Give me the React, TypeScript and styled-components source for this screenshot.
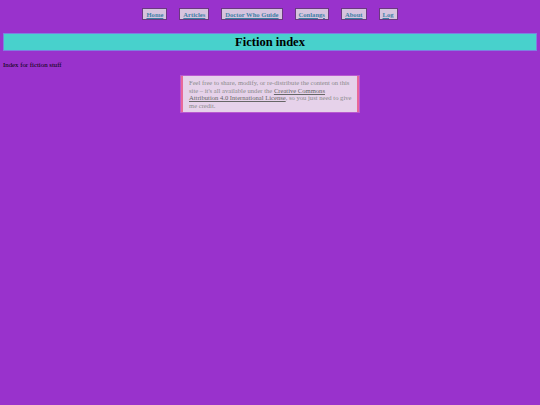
import styled, { createGlobalStyle } from "styled-components"

const Global = createGlobalStyle`
    html, body {
        margin: 0;
        background: #9932cc;
    }
    body {
        padding: 3px;
        font-family: "Liberation Serif", "Times New Roman", serif;
        font-size: 6.8px;
        font-weight: normal;
        color: #000;
    }
`

const links = ["Home", "Articles", "Doctor Who Guide", "Conlangs", "About", "Log"]

const App = () => {
    return (
        <>
            <Global />
            <Nav>
                {links.map((l) => (
                    <NavButton key={l} href="#">{l}</NavButton>
                ))}
            </Nav>
            <Header>Fiction index</Header>
            <Intro>Index for fiction stuff</Intro>
            <Notice>
                Feel free to share, modify, or re-distribute the content on this
                site – it's all available under the <a href="#">Creative Commons
                Attribution 4.0 International License</a>, so you just need to give
                me credit.
            </Notice>
        </>
    )
}

export default App

const Nav = styled.nav`
    display: flex;
    justify-content: center;
    gap: 12px;
    padding-top: 5px;
    height: 12px;
`

const NavButton = styled.a`
    display: flex;
    align-items: center;
    padding: 0 3px;
    background: #d6c4de;
    border: 1.5px solid #6a3a80;
    color: #3f7fa6;
    font-weight: bold;
    font-size: 6.6px;
    text-decoration: underline;
`

const Header = styled.h1`
    margin: 13px 0 0;
    height: 18px;
    box-sizing: border-box;
    background: #48d1cc;
    border: 1px solid #7e7ee0;
    font-size: 12.5px;
    line-height: 16px;
    text-align: center;
    font-weight: bold;
`

const Intro = styled.p`
    margin: 10px 0 0;
    line-height: 8px;
`

const Notice = styled.div`
    width: 178px;
    box-sizing: border-box;
    margin: 7px auto 0;
    padding: 3px 5px 3px 6px;
    background: #e6d2ea;
    border-left: 2px solid #e8689a;
    border-right: 2px solid #e8689a;
    box-shadow: 0 0 0 1px #b85ad0;
    color: #8a8a8a;
    font-size: 6.6px;
    line-height: 7.6px;

    a {
        color: #666;
        text-decoration: underline;
    }
`
